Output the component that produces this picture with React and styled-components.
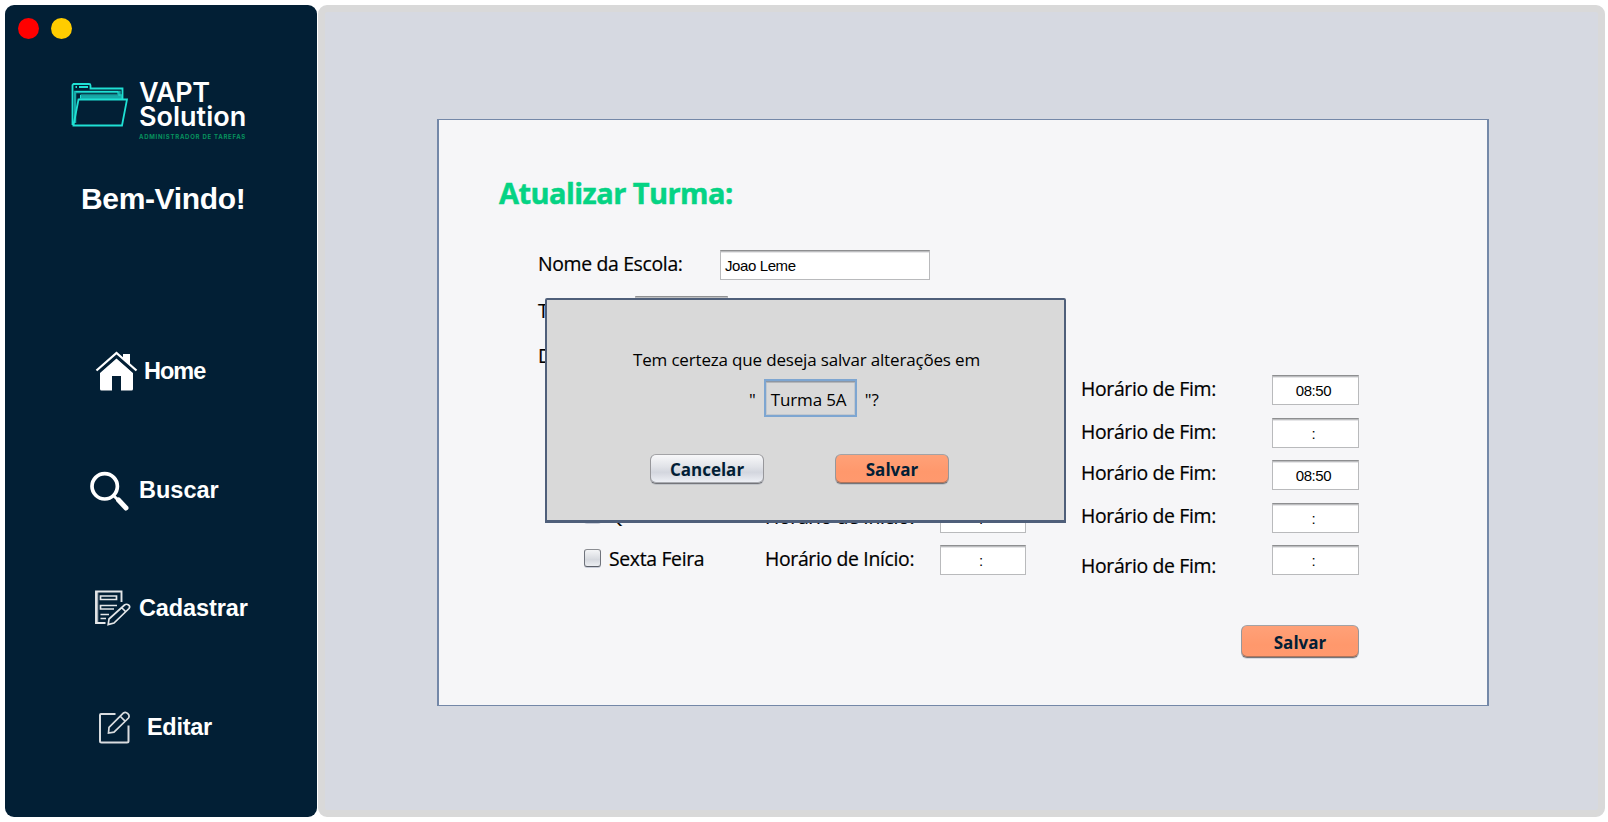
import React from "react";
import styled, { createGlobalStyle } from "styled-components";

const Global = createGlobalStyle`
  * { box-sizing: border-box; }
  body { margin: 0; background: #fff; }
`;

const ui = `"Open Sans", "Noto Sans", sans-serif`;
const arial = `"Liberation Sans", Arial, sans-serif`;

const Window = styled.div`
  width: 1608px;
  height: 822px;
  padding: 5px 3px 5px 5px;
  display: flex;
  gap: 1px;
  overflow: hidden;
`;

const Sidebar = styled.aside`
  width: 312px;
  height: 812px;
  flex: none;
  border-radius: 9px;
  background: #021f35;
  color: #fff;
  font-family: ${arial};
  font-weight: 700;
  display: flex;
  flex-direction: column;
  > * { flex: none; }
`;

const Controls = styled.div`
  display: flex;
  gap: 12px;
  padding: 13px 0 0 13px;
  height: 75px;
`;

const Dot = styled.span`
  width: 21px;
  height: 21px;
  border-radius: 50%;
  background: ${(p) => p.$color};
`;

const Brand = styled.div`
  height: 67px;
  display: flex;
  gap: 10px;
  padding-left: 66px;
`;

const BrandText = styled.div`
  font-family: Inter, sans-serif;
  font-weight: 600;
  font-size: 27px;
  line-height: 24px;
  letter-spacing: ${(p) => p.$ls || 0}px;
  white-space: nowrap;
`;

const BrandCopy = styled.div`
  padding-top: 1px;
`;

const Tagline = styled.div`
  font-family: Inter, sans-serif;
  font-weight: 700;
  font-size: 6px;
  line-height: 8px;
  margin-top: 4px;
  letter-spacing: 0.74px;
  color: #07925e;
  white-space: nowrap;
`;

const Welcome = styled.h1`
  margin: 34px 0 0 76px;
  font-size: 30px;
  line-height: 36px;
  letter-spacing: -0.35px;
  height: 36px;
`;

const Nav = styled.nav`
  display: flex;
  flex-direction: column;
  margin-top: 134px;
`;

const NavItem = styled.a`
  height: 118.6px;
  display: flex;
  align-items: flex-start;
  padding-left: ${(p) => p.$left}px;
  gap: ${(p) => p.$gap}px;
  font-size: 23.5px;
  line-height: 40px;
  letter-spacing: ${(p) => p.$ls || 0}px;
  &:last-child { height: 42px; }
`;

const Icon = styled.svg`
  flex: none;
  display: block;
`;

const Main = styled.main`
  width: 1287px;
  height: 812px;
  border-radius: 9px;
  border: 7px solid #d9d9d9;
  background: #d6d9e1;
  padding: 107px 0 0 112px;
`;

const Card = styled.section`
  width: 1052px;
  height: 587px;
  position: relative;
  background: #f6f6f8;
  border: solid #7488a8;
  border-width: 1px 2px;
  font-family: ${ui};
  color: #000;
  display: flex;
  flex-direction: column;
`;

const Title = styled.h2`
  margin: 53px 0 0 60px;
  font-size: 29px;
  line-height: 40px;
  color: #05d384;
  letter-spacing: -0.55px;
  -webkit-text-stroke: 0.5px #05d384;
`;

const FieldRow = styled.div`
  display: flex;
  margin: ${(p) => p.$top}px 0 0 99px;
  height: 30px;
`;

const Label = styled.label`
  width: ${(p) => p.$w}px;
  padding-top: ${(p) => p.$dy || 0}px;
  margin-top: ${(p) => (p.$up ? -1 : 0)}px;
  font-size: 19.4px;
  line-height: 28px;
  flex: none;
  white-space: nowrap;
  letter-spacing: -0.33px;
  -webkit-text-stroke: 0.2px #000;
`;

const Field = styled.div`
  width: ${(p) => p.$w}px;
  height: 30px;
  flex: none;
  background: #fff;
  border: 1px solid #b9babc;
  border-top-color: #8e8f91;
  box-shadow: inset 0 1px 0 #bcbdbf, inset 0 2px 0 #e6e6e8;
  font-family: ${arial};
  font-size: 15px;
  line-height: 29px;
  padding-left: ${(p) => (p.$center ? 0 : 4)}px;
  padding-right: ${(p) => (p.$center ? 4 : 0)}px;
  text-align: ${(p) => (p.$center ? "center" : "left")};
  letter-spacing: -0.4px;
`;

const Schedule = styled.div`
  display: flex;
  flex-direction: column;
  gap: 12.5px;
  margin: 4px 0 0 145px;
`;

const DayRow = styled.div`
  display: flex;
  height: 30px;
`;

const Day = styled.div`
  width: 181px;
  display: flex;
  gap: 8px;
  flex: none;
`;

const Check = styled.span`
  width: 17px;
  height: 18px;
  margin-top: ${(p) => (p.$up ? 2 : 4)}px;
  border: 1px solid #7f838a;
  border-color: #8b8d92 #6f737c #5c6069;
  border-radius: 3px;
  background: linear-gradient(#f4f5f7, #d6d9df 60%, #eceef2);
  box-shadow: 0 1px 0 #c9cdd9;
`;

const Slot = styled.div`
  width: 316px;
  display: flex;
  flex: none;
`;

const Button = styled.button`
  width: ${(p) => p.$w}px;
  height: ${(p) => p.$h}px;
  padding: 2px 0 0;
  border: 1px solid;
  border-color: #a3a3a6 #97979b #74757a;
  border-radius: 6px;
  background: ${(p) => (p.$accent ? "linear-gradient(#ffa178, #ff986c 60%, #ff996e)" : "linear-gradient(#f8f8fa, #e2e4e9 40%, #d3d6de 62%, #f0f2f7)")};
  box-shadow: inset 0 -1px 0 ${(p) => (p.$accent ? "#b0745b" : "#a9abb1")}, 0 1px 0 rgba(120, 130, 150, 0.25);
  color: #021e36;
  font-family: ${ui};
  font-weight: 700;
  font-size: 17px;
  line-height: 26px;
`;

const Actions = styled.div`
  margin: 50px 0 0 802px;
`;

const Dialog = styled.div`
  position: absolute;
  left: 106px;
  top: 178px;
  width: 521px;
  height: 225px;
  border: 2px solid #4f5f7a;
  border-bottom-width: 3px;
  border-radius: 2px 2px 0 0;
  background: #d9d9d9;
  font-size: 17px;
  display: flex;
  flex-direction: column;
`;

const Question = styled.p`
  margin: 48px 0 0 86px;
  line-height: 24px;
  white-space: nowrap;
  letter-spacing: -0.17px;
`;

const NameRow = styled.div`
  display: flex;
  align-items: center;
  margin: 7px 0 0 202px;
  height: 38px;
  line-height: 24px;
`;

const Quote = styled.span`
  padding-top: 3px;
`;

const NameField = styled.span`
  width: 93px;
  height: 38px;
  margin: 0 8px;
  padding-left: 5px;
  line-height: 37px;
  white-space: nowrap;
  letter-spacing: -0.15px;
  border: 2px solid #7ea6d1;
  box-shadow: inset 0 1px 0 #8c97a5, inset 0 2px 0 #b4b6b9, inset 0 0 0 1px #c2c8cf;
`;

const DialogActions = styled.div`
  display: flex;
  gap: 71px;
  margin: 37px 0 0 103px;
`;

const slots = [
  { fim: "08:50" },
  { fim: ":" },
  { fim: "08:50", up: true },
  { day: "Quinta Feira", fim: ":", up: true },
  { day: "Sexta Feira", fim: ":", dy: 7 },
];

const FolderIcon = () => (
  <Icon width="58" height="48" viewBox="0 0 58 48" fill="none" stroke="#1fe0d4">
    <path d="M4 43V12h44.500v5" stroke="#16a9a8" strokeWidth="2.500" />
    <path d="M9.500 15.500h42v3.500h-43z" fill="#16a9a8" stroke="none" />
    <path d="M1.500 45V5L2.500 4H18q1.500 0 1.500 1.500V8.500H51.500V19" strokeWidth="1.800" />
    <path d="M1.500 45.500H51L56 19.500H7.500L2.500 45" strokeWidth="1.800" />
    <path d="M4.500 7h1.500M8 7h9" strokeWidth="2" />
    <path d="M4.500 11.500h42.500v3M9.500 18v-3h42" strokeWidth="1" />
  </Icon>
);

const HomeIcon = () => (
  <Icon width="43" height="42" viewBox="0 0 43 42" fill="#fff">
    <path d="M5 22 21.500 7.500 38 22v16q0 1.500-1.500 1.500H26V25h-9v14.500H6.500Q5 39.500 5 38Z" />
    <path d="M28 3h7v11l-7-6Z" />
    <path d="m2 21.500L21.500 4.500l19 17" fill="none" stroke="#021f35" strokeWidth="3.500" />
    <path d="m1.500 19.500L21.500 2l20 17.500" fill="none" stroke="#fff" strokeWidth="2.300" />
  </Icon>
);

const SearchIcon = () => (
  <Icon width="42" height="42" viewBox="0 0 42 42" fill="none" stroke="#fff">
    <circle cx="15.700" cy="16.300" r="12.700" strokeWidth="3.700" />
    <path d="m25 26 4 4" strokeWidth="3" />
    <path d="m29.500 30 7.500 8" strokeWidth="5" strokeLinecap="round" />
  </Icon>
);

const FormIcon = () => (
  <Icon width="38" height="42" viewBox="0 0 38 42" fill="none" stroke="#e4e6e8" strokeWidth="1.700">
    <path d="M2 35V3.500" stroke="#a8b0b8" strokeWidth="2.500" />
    <path d="M10.500 35H1V3.500h25.500V14" strokeWidth="1.900" />
    <path d="M5.500 8h16v3.500h-16zM22 17.500H5.500V21H19M5.500 26.500H14M5.500 30.500H11" />
    <path d="m14 31-.8 5.500 5.800-1.500L34 20.500q1.500-2-.5-3.500t-4 0ZM26.500 19.500l4.500 4.500" />
  </Icon>
);

const EditIcon = () => (
  <Icon width="33" height="42" viewBox="0 0 33 42" fill="none" stroke="#d9dcdf" strokeWidth="1.700">
    <path d="M17.500 7H3Q2 7 2 8V34Q2 35.500 3.500 35.500H29q1.500 0 1.500-1.500V18.500" strokeWidth="2" />
    <path d="M11 20.500 10.500 26l5.500-.8L30.500 11q1.500-2-.7-4.300t-4.300-.7ZM22.500 9.500l4.800 4.800" />
  </Icon>
);

export default function App() {
  return (
    <Window>
      <Global />
      <Sidebar>
        <Controls><Dot $color="#f00" /><Dot $color="#fc0" /></Controls>
        <Brand>
          <FolderIcon />
          <BrandCopy>
            <BrandText $ls={-0.5}>VAPT</BrandText>
            <BrandText>Solution</BrandText>
            <Tagline>ADMINISTRADOR DE TAREFAS</Tagline>
          </BrandCopy>
        </Brand>
        <Welcome>Bem-Vindo!</Welcome>
        <Nav>
          <NavItem $left={90} $gap={6} $ls={-1}><HomeIcon />Home</NavItem>
          <NavItem $left={84} $gap={8}><SearchIcon />Buscar</NavItem>
          <NavItem $left={90} $gap={6} $ls={-0.1}><FormIcon />Cadastrar</NavItem>
          <NavItem $left={93} $gap={16} $ls={-0.3}><EditIcon />Editar</NavItem>
        </Nav>
      </Sidebar>
      <Main>
        <Card>
          <Title>Atualizar Turma:</Title>
          <FieldRow $top={37}>
            <Label $w={182}>Nome da Escola:</Label>
            <Field $w={210}>Joao Leme</Field>
          </FieldRow>
          <FieldRow $top={16}>
            <Label $w={97} $dy={1}>Turma:</Label>
            <Field $w={93} />
          </FieldRow>
          <FieldRow $top={15}>
            <Label $w={97} $dy={1}>Dias:</Label>
          </FieldRow>
          <Schedule>
            {slots.map((s, i) => (
              <DayRow key={i}>
                <Day>{s.day && <><Check $up={s.up} /><Label $up={s.up}>{s.day}</Label></>}</Day>
                <Slot>{s.day && <><Label $w={175}>Horário de Início:</Label><Field $w={86} $center>:</Field></>}</Slot>
                <Label $w={191} $dy={s.dy} $up={s.up}>Horário de Fim:</Label>
                <Field $w={87} $center>{s.fim}</Field>
              </DayRow>
            ))}
          </Schedule>
          <Actions><Button $w={118} $h={33} $accent>Salvar</Button></Actions>
          <Dialog>
            <Question>Tem certeza que deseja salvar alterações em</Question>
            <NameRow><Quote>"</Quote><NameField>Turma 5A</NameField><Quote>"?</Quote></NameRow>
            <DialogActions>
              <Button $w={114} $h={30}>Cancelar</Button>
              <Button $w={114} $h={30} $accent>Salvar</Button>
            </DialogActions>
          </Dialog>
        </Card>
      </Main>
    </Window>
  );
}
